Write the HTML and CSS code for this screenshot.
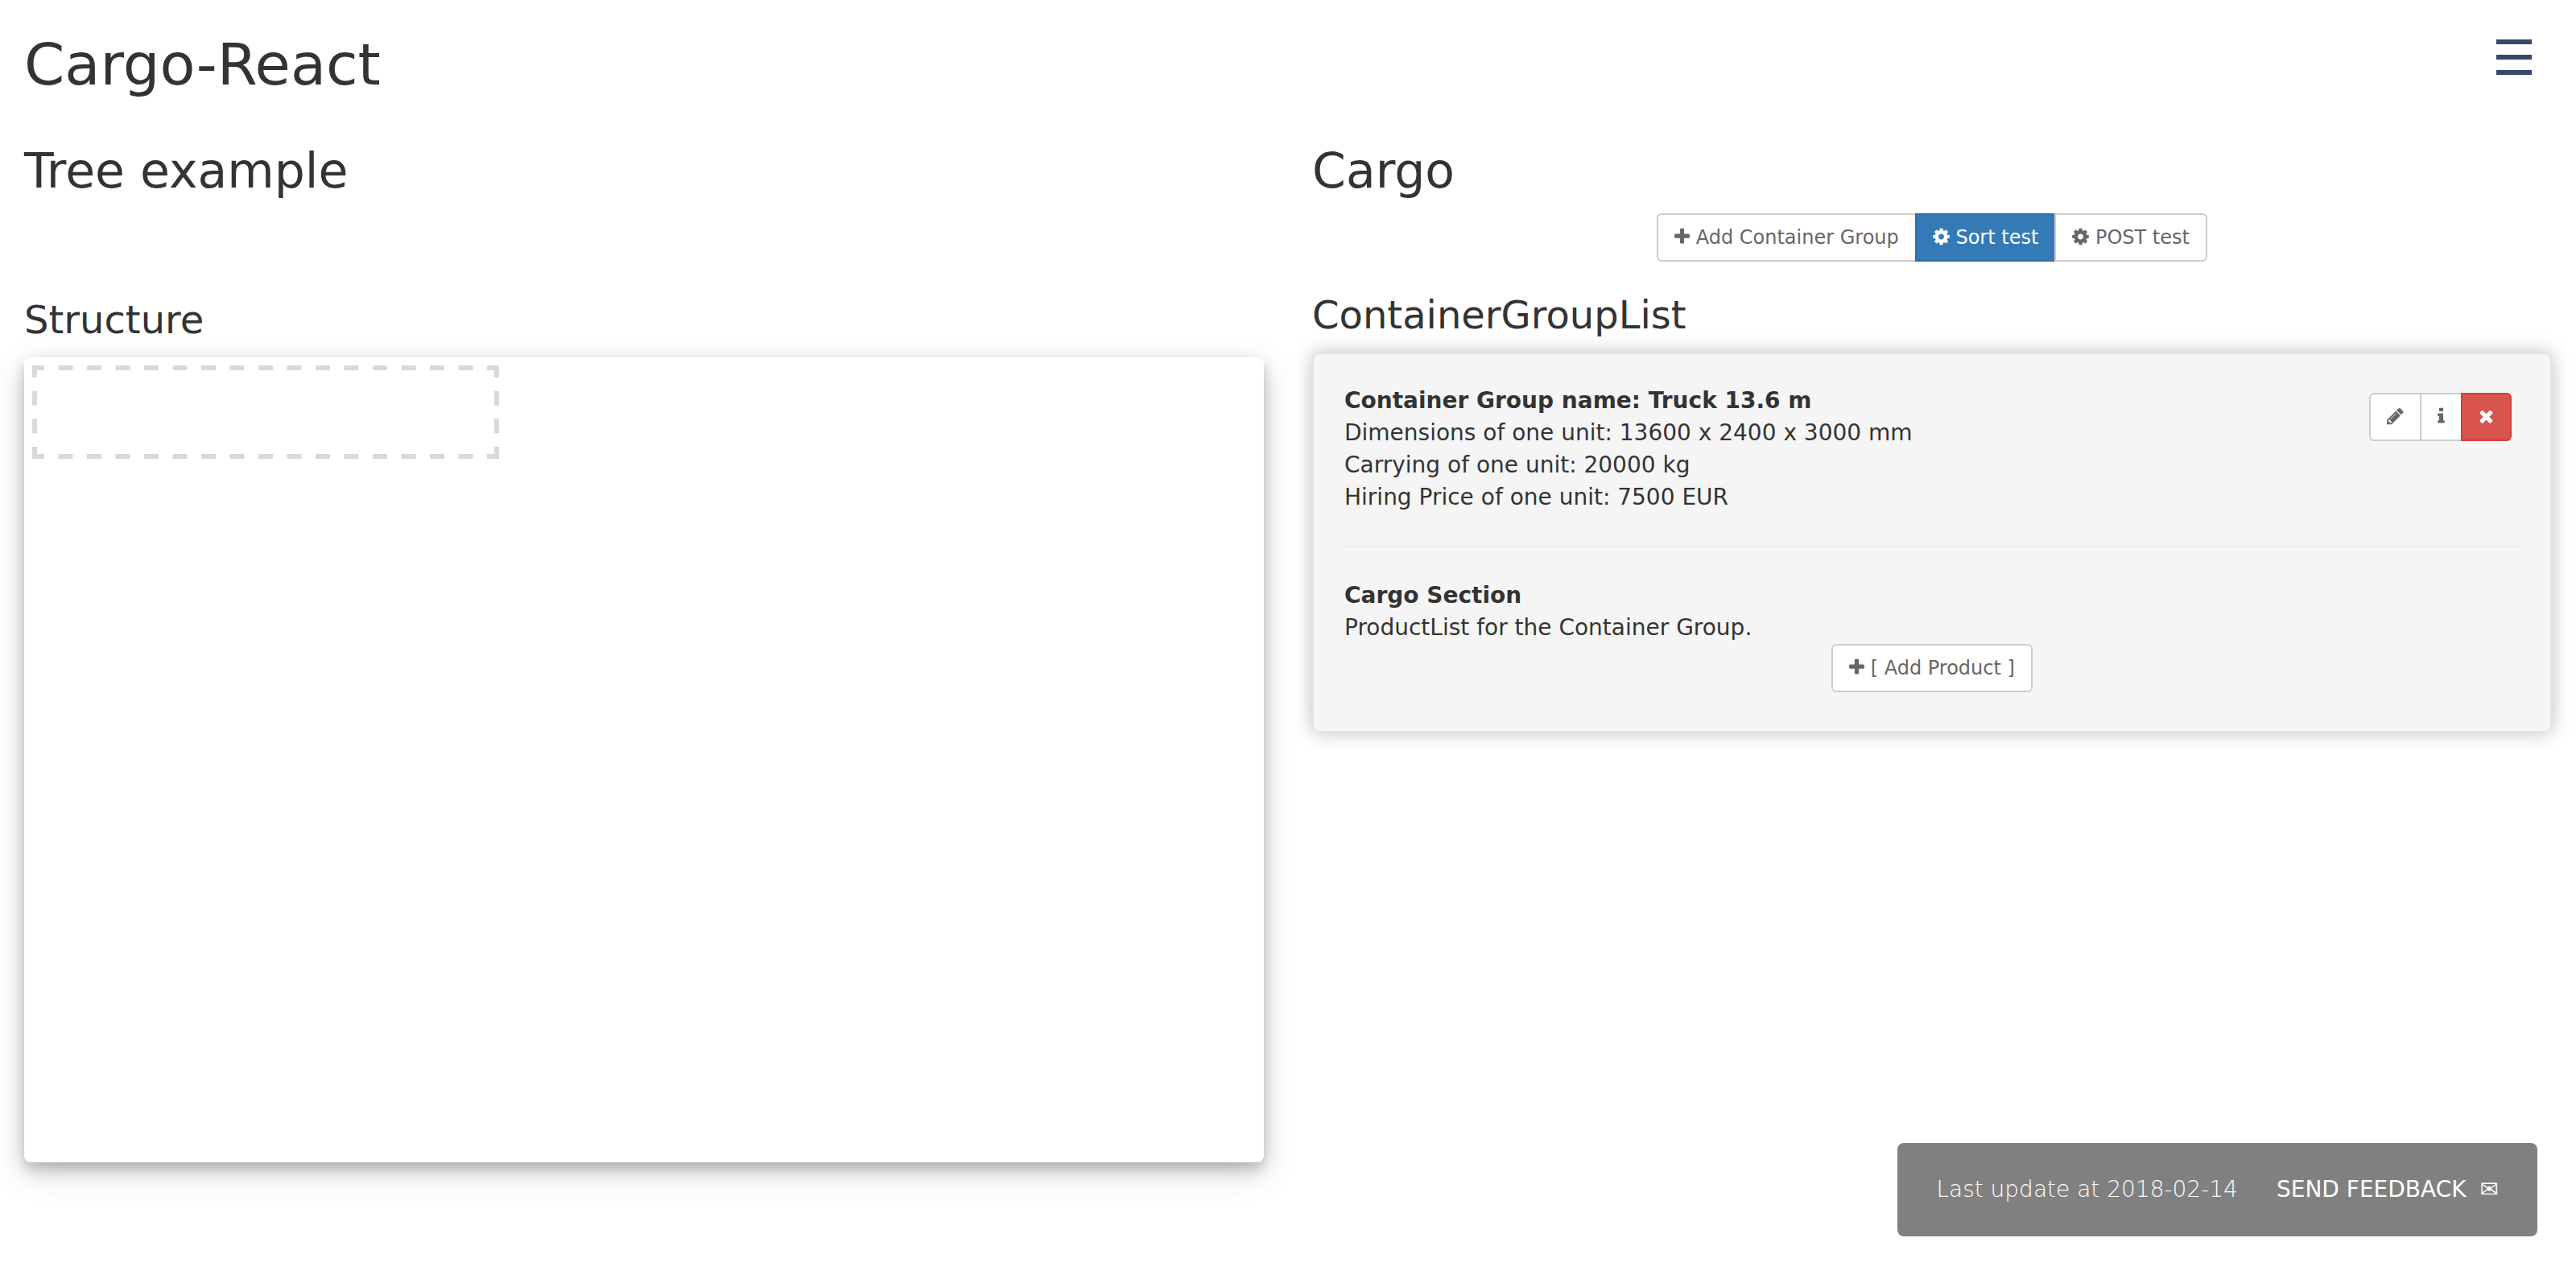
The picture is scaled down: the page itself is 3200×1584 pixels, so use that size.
FILE: index.html
```html
<!DOCTYPE html>
<html lang="en">
<head>
<meta charset="utf-8">
<title>Cargo-React</title>
<link rel="stylesheet" href="styles.css">
</head>
<body>
<svg class="sprite" aria-hidden="true">
  <symbol id="plus" viewBox="192 0 1408 1792"><path d="M1600 736v192q0 40-28 68t-68 28h-416v416q0 40-28 68t-68 28h-192q-40 0-68-28t-28-68v-416h-416q-40 0-68-28t-28-68v-192q0-40 28-68t68-28h416v-416q0-40 28-68t68-28h192q40 0 68 28t28 68v416h416q40 0 68 28t28 68z"/></symbol>
  <symbol id="cog" viewBox="128 0 1536 1792"><path d="M1152 896q0-106-75-181t-181-75-181 75-75 181 75 181 181 75 181-75 75-181zm512-109v222q0 12-8 23t-20 13l-185 28q-19 54-39 91 35 50 107 138 10 12 10 25t-9 23q-27 37-99 108t-94 71q-12 0-26-9l-138-108q-44 23-91 38-16 136-29 186-7 28-36 28h-222q-14 0-24.500-8.500t-11.500-21.500l-28-184q-49-16-90-37l-141 107q-10 9-25 9-14 0-25-11-126-114-165-168-7-10-7-23 0-12 8-23 15-21 51-66.500t54-70.500q-27-50-41-99l-183-27q-13-2-21-12.500t-8-23.500v-222q0-12 8-23t19-13l186-28q14-46 39-92-40-57-107-138-10-12-10-24 0-10 9-23 26-36 98.500-107.500t94.500-71.500q13 0 26 10l138 107q44-23 91-38 16-136 29-186 7-28 36-28h222q14 0 24.500 8.500t11.500 21.500l28 184q49 16 90 37l142-107q9-9 24-9 13 0 25 10 129 119 165 170 7 8 7 22 0 12-8 23-15 21-51 66.500t-54 70.500q26 50 41 98l183 28q13 2 21 12.500t8 23.500z"/></symbol>
  <symbol id="pencil" viewBox="128 0 1536 1792"><path d="M491 1536l91-91-235-235-91 91v107h128v128h107zm523-928q0-22-22-22-10 0-17 7l-542 542q-7 7-7 17 0 22 22 22 10 0 17-7l542-542q7-7 7-17zm-54-192l416 416-832 832h-416v-416zm683 96q0 53-37 90l-166 166-416-416 166-165q36-38 90-38 53 0 91 38l235 234q37 39 37 91z"/></symbol>
  <symbol id="info" viewBox="576 0 640 1792"><path d="M1216 1344v128q0 26-19 45t-45 19h-512q-26 0-45-19t-19-45v-128q0-26 19-45t45-19h64v-384h-64q-26 0-45-19t-19-45v-128q0-26 19-45t45-19h384q26 0 45 19t19 45v576h64q26 0 45 19t19 45zm-128-1152v192q0 26-19 45t-45 19h-256q-26 0-45-19t-19-45v-192q0-26 19-45t45-19h256q26 0 45 19t19 45z"/></symbol>
  <symbol id="times" viewBox="192 0 1408 1792"><path d="M1490 1322q0 40-28 68l-136 136q-28 28-68 28t-68-28l-294-294-294 294q-28 28-68 28t-68-28l-136-136q-28-28-28-68t28-68l294-294-294-294q-28-28-28-68t28-68l136-136q28-28 68-28t68 28l294 294 294-294q28-28 68-28t68 28l136 136q28 28 28 68t-28 68l-294 294 294 294q28 28 28 68z"/></symbol>
</svg>

<header class="header">
  <h1 class="title">Cargo-React</h1>
  <button class="menu" type="button" aria-label="Menu">
    <svg class="bars" viewBox="0 0 44 44" aria-hidden="true"><path d="M0 0h44v6H0zM0 19h44v6H0zM0 38h44v6H0z"/></svg>
  </button>
</header>

<main class="columns">
  <section class="column">
    <h2 class="heading">Tree example</h2>
    <h3 class="subheading subheading-tree">Structure</h3>
    <div class="tree">
      <svg class="placeholder" viewBox="0 0 580 116" aria-hidden="true">
        <path d="M-3 3H583M-3 113H583" stroke-dasharray="18 17.5"/>
        <path d="M3 -3V119M577 -3V119" stroke-dasharray="18 16.67"/>
      </svg>
    </div>
  </section>

  <section class="column">
    <h2 class="heading">Cargo</h2>
    <div class="toolbar">
      <div class="group">
        <button class="btn" type="button"><svg class="icon" aria-hidden="true"><use href="#plus"/></svg> Add Container Group</button>
        <button class="btn btn-primary" type="button"><svg class="icon icon-wide" aria-hidden="true"><use href="#cog"/></svg> Sort test</button>
        <button class="btn" type="button"><svg class="icon icon-wide" aria-hidden="true"><use href="#cog"/></svg> POST test</button>
      </div>
    </div>
    <h3 class="subheading">ContainerGroupList</h3>
    <article class="well">
      <div class="summary">
        <div>
          <strong>Container Group name: Truck 13.6 m</strong>
          <div>Dimensions of one unit: 13600 x 2400 x 3000 mm</div>
          <div>Carrying of one unit: 20000 kg</div>
          <div>Hiring Price of one unit: 7500 EUR</div>
        </div>
        <div class="group group-actions">
          <button class="btn" type="button" aria-label="Edit"><svg class="icon icon-wide" aria-hidden="true"><use href="#pencil"/></svg></button>
          <button class="btn" type="button" aria-label="Info"><svg class="icon icon-narrow" aria-hidden="true"><use href="#info"/></svg></button>
          <button class="btn btn-danger" type="button" aria-label="Delete"><svg class="icon" aria-hidden="true"><use href="#times"/></svg></button>
        </div>
      </div>
      <hr class="divider">
      <strong>Cargo Section</strong>
      <div>ProductList for the Container Group.</div>
      <div class="toolbar toolbar-product">
        <button class="btn btn-single" type="button"><svg class="icon" aria-hidden="true"><use href="#plus"/></svg> [ Add Product ]</button>
      </div>
    </article>
  </section>
</main>

<footer class="feedback">
  <span class="updated">Last update at 2018-02-14</span>
  <a class="send" href="#feedback">SEND FEEDBACK <span class="mail">✉</span></a>
</footer>
</body>
</html>
```
FILE: styles.css
```css
* {
  box-sizing: border-box;
}

body {
  margin: 0;
  background: #fff;
  color: #333;
  font-family: "DejaVu Sans", sans-serif;
  font-size: 28px;
  line-height: 40px;
}

h1,
h2,
h3 {
  margin: 40px 0 20px;
  font-weight: 400;
}

.sprite {
  position: absolute;
  width: 0;
  height: 0;
}

.header {
  display: flex;
  justify-content: space-between;
  align-items: flex-start;
  padding: 0 55px 0 30px;
}

.title {
  font-size: 72px;
  line-height: 80px;
}

.menu {
  margin-top: 49px;
  padding: 0;
  border: 0;
  background: none;
  color: #36486b;
  cursor: pointer;
}

.bars {
  display: block;
  width: 44px;
  height: 44px;
  fill: currentColor;
}

.columns {
  display: grid;
  grid-template-columns: 1fr 1fr;
  gap: 60px;
  padding: 0 30px 80px;
}

.heading {
  margin-top: 39px;
  font-size: 60px;
  line-height: 66px;
}

.subheading {
  font-size: 48px;
  line-height: 53px;
}

.subheading-tree {
  margin-top: 126px;
}

.tree {
  height: 1000px;
  padding: 10px;
  border-radius: 8px;
  box-shadow: 0 8px 16px rgba(0, 0, 0, 0.2), 0 12px 40px rgba(0, 0, 0, 0.19);
}

.placeholder {
  display: block;
  width: 580px;
  height: 116px;
  overflow: hidden;
  fill: none;
  stroke: #d9d9d9;
  stroke-width: 6px;
}

.toolbar {
  display: flex;
  justify-content: center;
}

.toolbar-product {
  margin-bottom: 10px;
}

.group {
  display: flex;
}

.group-actions {
  margin: 10px 10px 0 0;
}

.btn {
  height: 60px;
  padding: 10px 20px;
  border: 2px solid #ccc;
  background: #fff;
  color: #666;
  font: 24px/36px "DejaVu Sans", sans-serif;
  white-space: nowrap;
  cursor: pointer;
}

.btn + .btn {
  margin-left: -2px;
}

.btn:first-child {
  border-radius: 6px 0 0 6px;
}

.btn:last-child {
  border-radius: 0 6px 6px 0;
}

.btn.btn-single {
  border-radius: 6px;
}

.btn-primary {
  border-color: #2e6da4;
  background: #337ab7;
  color: #fff;
}

.btn-danger {
  border-color: #d43f3a;
  background: #d9534f;
  color: #fff;
}

.icon {
  width: 19px;
  height: 24px;
  fill: currentColor;
  vertical-align: -3px;
}

.icon-wide {
  width: 21px;
}

.icon-narrow {
  width: 9px;
}

.well {
  padding: 38px;
  border: 2px solid #e3e3e3;
  border-radius: 8px;
  background: #f5f5f5;
  box-shadow: 0 0 24px rgba(0, 0, 0, 0.26);
}

.summary {
  display: flex;
  justify-content: space-between;
  align-items: flex-start;
}

.divider {
  margin: 40px 0;
  border: 0;
  border-top: 2px solid #eee;
}

.feedback {
  position: fixed;
  right: 48px;
  bottom: 48px;
  display: flex;
  gap: 48px;
  padding: 38px 48px;
  border-radius: 8px;
  background: #808080;
  color: #fff;
}

.updated {
  font-weight: 200;
}

.send {
  color: #fff;
  text-decoration: none;
}

.mail {
  margin-left: 8px;
}
```
